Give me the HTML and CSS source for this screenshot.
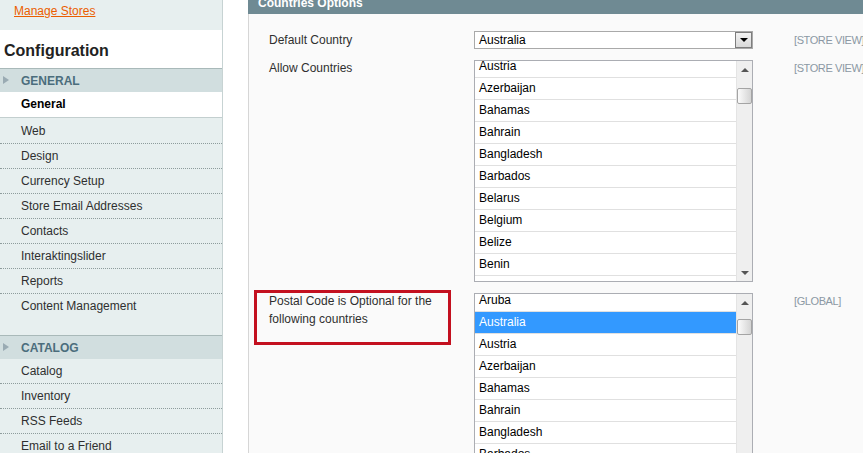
FILE: index.html
```html
<!DOCTYPE html>
<html lang="en">
<head>
  <meta charset="UTF-8">
  <title>Configuration - Countries Options</title>
  <link rel="stylesheet" href="styles.css">
</head>
<body>
  <div class="page">
    <div class="side">
      <div class="store-box">
        <a href="#" class="store-link">Manage Stores</a>
      </div>
      <div class="side-title">Configuration</div>

      <div class="tab-group">
        <div class="group-title">General</div>
        <ul class="tabs">
          <li class="active">General</li>
          <li>Web</li>
          <li>Design</li>
          <li>Currency Setup</li>
          <li>Store Email Addresses</li>
          <li>Contacts</li>
          <li>Interaktingslider</li>
          <li>Reports</li>
          <li>Content Management</li>
        </ul>
      </div>

      <div class="tab-group">
        <div class="group-title">Catalog</div>
        <ul class="tabs">
          <li>Catalog</li>
          <li>Inventory</li>
          <li>RSS Feeds</li>
          <li>Email to a Friend</li>
        </ul>
      </div>
    </div>

    <div class="main">
      <div class="section">
        <div class="legend">Countries Options</div>
        <div class="fieldset">
          <div class="form-grid">
            <div class="label">Default Country</div>
            <div class="value">
              <div class="select">
                <span class="select-text">Australia</span>
                <span class="select-btn"></span>
              </div>
            </div>
            <div class="scope">[STORE VIEW]</div>

            <div class="label tall">Allow Countries</div>
            <div class="value">
              <div class="multi">
                <div class="opts opts-allow">
                  <div class="opt">Austria</div>
                  <div class="opt">Azerbaijan</div>
                  <div class="opt">Bahamas</div>
                  <div class="opt">Bahrain</div>
                  <div class="opt">Bangladesh</div>
                  <div class="opt">Barbados</div>
                  <div class="opt">Belarus</div>
                  <div class="opt">Belgium</div>
                  <div class="opt">Belize</div>
                  <div class="opt">Benin</div>
                  <div class="opt">Bermuda</div>
                </div>
                <div class="sb">
                  <div class="sb-up"></div>
                  <div class="sb-thumb thumb-allow"></div>
                  <div class="sb-down"></div>
                </div>
              </div>
            </div>
            <div class="scope tall">[STORE VIEW]</div>

            <div class="label tall marked">Postal Code is Optional for the following countries</div>
            <div class="value">
              <div class="multi">
                <div class="opts opts-postal">
                  <div class="opt">Aruba</div>
                  <div class="opt selected">Australia</div>
                  <div class="opt">Austria</div>
                  <div class="opt">Azerbaijan</div>
                  <div class="opt">Bahamas</div>
                  <div class="opt">Bahrain</div>
                  <div class="opt">Bangladesh</div>
                  <div class="opt">Barbados</div>
                  <div class="opt">Belarus</div>
                  <div class="opt">Belgium</div>
                </div>
                <div class="sb">
                  <div class="sb-up"></div>
                  <div class="sb-thumb thumb-postal"></div>
                  <div class="sb-down"></div>
                </div>
              </div>
            </div>
            <div class="scope tall">[GLOBAL]</div>
          </div>
        </div>
      </div>
    </div>
  </div>
</body>
</html>
```

FILE: styles.css
```css
* {
  box-sizing: border-box;
}

html, body {
  overflow: hidden;
}

body {
  margin: 0;
  font-family: Arial, "Liberation Sans", sans-serif;
  font-size: 12px;
  color: #2f2f2f;
  background: #fff;
}

.page {
  display: flex;
  align-items: flex-start;
  width: max-content;
}

/* left column */

.side {
  width: 223px;
  flex: none;
}

.store-box {
  height: 30px;
  padding: 4px 14px 0;
  line-height: 14px;
  background: #e7efef;
  border-right: 1px solid #c7d3d3;
}

.store-link {
  color: #eb5e00;
  text-decoration: underline;
}

.side-title {
  height: 38px;
  padding: 12px 4px 0;
  font-size: 16px;
  line-height: 18px;
  font-weight: bold;
  color: #222;
  background: #fff;
  border-right: 1px solid #c7d3d3;
}

.tab-group {
  background: #e7efef;
  border-right: 1px solid #c7d3d3;
  padding-bottom: 16px;
}

.group-title {
  position: relative;
  height: 24px;
  padding-left: 21px;
  line-height: 24px;
  border-top: 1px solid #a9b9b9;
  background: #d1dedf;
  color: #4b6d7c;
  font-weight: bold;
  text-transform: uppercase;
}

.group-title::before {
  content: "";
  position: absolute;
  left: 3px;
  top: 7px;
  border-left: 6px solid #9aabb3;
  border-top: 4px solid transparent;
  border-bottom: 4px solid transparent;
}

.tabs {
  list-style: none;
  margin: 0;
  padding: 0;
}

.tabs li {
  height: 25px;
  padding-left: 21px;
  line-height: 24px;
  border-bottom: 1px dotted #8e9c9c;
  color: #2f2f2f;
}

.tabs li:last-child {
  border-bottom: none;
}

.tabs li.active {
  height: 26px;
  line-height: 25px;
  margin-bottom: 1px;
  background: #fff;
  color: #000;
  font-weight: bold;
  border-bottom: 1px solid #c3cfcf;
}

/* main column */

.main {
  flex: none;
  padding-left: 25px;
}

.section {
  width: 720px;
  margin-top: -7px;
}

.legend {
  height: 21px;
  padding-left: 10px;
  line-height: 21px;
  background: #6f8a93;
  color: #fff;
  font-weight: bold;
}

.fieldset {
  min-height: 480px;
  padding: 17px 0 0 20px;
  background: #fafafa;
  border-left: 1px solid #d6d6d6;
}

.form-grid {
  display: grid;
  grid-template-columns: 205px 279px auto;
  row-gap: 11px;
  align-items: start;
}

.label {
  line-height: 18px;
  padding-right: 20px;
  color: #2f2f2f;
}

.tall {
  margin-top: -1px;
}

.label.marked {
  position: relative;
}

/* red annotation frame */
.label.marked::after {
  content: "";
  position: absolute;
  left: -15px;
  top: -2px;
  width: 191px;
  height: 49px;
  border: 3px solid #c3101f;
}

.scope {
  padding-left: 41px;
  font-size: 11px;
  line-height: 18px;
  letter-spacing: -0.4px;
  color: #8b98a4;
  white-space: nowrap;
}

.select {
  display: flex;
  height: 18px;
  padding-left: 4px;
  line-height: 16px;
  background: #fff;
  border: 1px solid #a9a9a9;
  color: #000;
}

.select-text {
  flex: 1;
}

.select-btn {
  display: flex;
  align-items: center;
  justify-content: center;
  width: 17px;
  height: 16px;
  border: 1px solid #7d7d7d;
  background: linear-gradient(#f2f2f2, #d9d9d9);
}

.select-btn::before {
  content: "";
  border-top: 4px solid #000;
  border-left: 4px solid transparent;
  border-right: 4px solid transparent;
}

.multi {
  display: flex;
  height: 222px;
  background: #fff;
  border: 1px solid #abadb3;
}

.opts {
  flex: 1;
  overflow: hidden;
}

.opts-allow .opt:first-child {
  margin-top: -5px;
}

.opts-postal .opt:first-child {
  margin-top: -4px;
}

.opt {
  height: 22px;
  padding-left: 4px;
  line-height: 21px;
  border-bottom: 1px solid #e0e0e0;
  color: #000;
  white-space: nowrap;
}

.opt.selected {
  background: #3399ff;
  color: #fff;
}

.sb {
  display: flex;
  flex-direction: column;
  align-items: center;
  width: 16px;
  background: #efefef;
  border-left: 1px solid #e4e4e4;
}

.sb-up,
.sb-down {
  display: flex;
  align-items: center;
  justify-content: center;
  width: 100%;
  height: 17px;
}

.sb-up::before {
  content: "";
  border-bottom: 4px solid #555;
  border-left: 4px solid transparent;
  border-right: 4px solid transparent;
}

.sb-down {
  margin-top: auto;
}

.sb-down::before {
  content: "";
  border-top: 4px solid #555;
  border-left: 4px solid transparent;
  border-right: 4px solid transparent;
}

.sb-thumb {
  width: 15px;
  height: 16px;
  border: 1px solid #a4a4a4;
  border-radius: 2px;
  background: linear-gradient(to right, #fbfbfb, #d4d4d4);
}

.thumb-allow {
  margin-top: 10px;
}

.thumb-postal {
  margin-top: 8px;
}
```
